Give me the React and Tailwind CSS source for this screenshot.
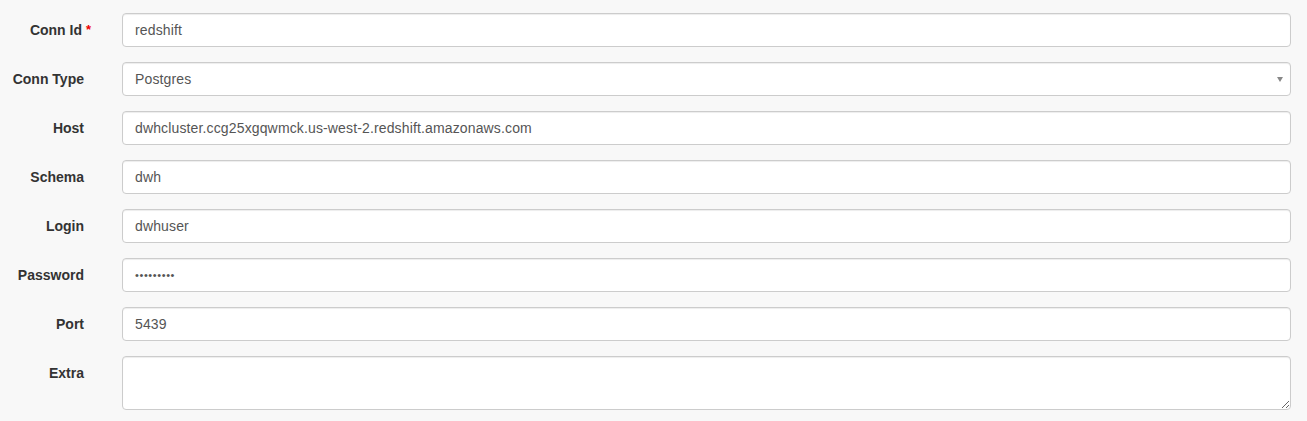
import React from "react";

const rows = [
  { label: "Conn Id", value: "redshift", required: true },
  { label: "Conn Type", value: "Postgres", select: true },
  { label: "Host", value: "dwhcluster.ccg25xgqwmck.us-west-2.redshift.amazonaws.com" },
  { label: "Schema", value: "dwh" },
  { label: "Login", value: "dwhuser" },
  { label: "Password", value: "•••••••••", password: true },
  { label: "Port", value: "5439" },
  { label: "Extra", value: "", textarea: true },
];

export default function App() {
  return (
    <div
      className="w-[1307px] h-[421px] bg-[#f8f8f8] pt-[13px] text-[14px] text-[#333]"
      style={{ fontFamily: '"Liberation Sans", Arial, sans-serif' }}
    >
      <div className="flex flex-col gap-[15px]">
        {rows.map((r) => (
          <div key={r.label} className="flex items-start">
            <div className="w-[84px] shrink-0 text-right font-bold leading-[20px] pt-[7px] relative">
              <span className={r.required ? "mr-[2px]" : ""}>{r.label}</span>
              {r.required && (
                <span className="absolute left-[86px] top-[7px] text-[#e00] font-bold text-[13px]">*</span>
              )}
            </div>
            <div className="ml-[38px] w-[1169px]">
              {r.textarea ? (
                <textarea
                  rows={2}
                  className="block w-full h-[54px] bg-white border border-[#ccc] rounded-[4px] px-[12px] py-[6px] leading-[20px] shadow-[inset_0_1px_1px_rgba(0,0,0,0.075)] outline-none"
                  defaultValue=""
                />
              ) : (
                <div className="relative h-[34px] bg-white border border-[#ccc] rounded-[4px] px-[12px] flex items-center shadow-[inset_0_1px_1px_rgba(0,0,0,0.075)]">
                  <span
                    className={
                      r.password
                        ? "text-[#555] tracking-[0.6px] text-[11px]"
                        : "text-[#555] tracking-[0.14px]"
                    }
                  >
                    {r.value}
                  </span>
                  {r.select && (
                    <svg
                      className="absolute right-[7px] top-[14px]"
                      width="6"
                      height="5"
                      viewBox="0 0 6 5"
                    >
                      <path d="M0 0 H6 L3 5 Z" fill="#888" />
                    </svg>
                  )}
                </div>
              )}
            </div>
          </div>
        ))}
      </div>
    </div>
  );
}
